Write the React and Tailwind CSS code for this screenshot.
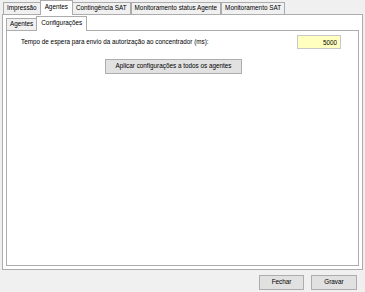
import { useState } from 'react'

const OUTER_TABS = ['Impressão', 'Agentes', 'Contingência SAT', 'Monitoramento status Agente', 'Monitoramento SAT']
const INNER_TABS = ['Agentes', 'Configurações']

function Tab({ label, active, onClick }) {
  return (
    <button
      onClick={onClick}
      className={`leading-none whitespace-nowrap border border-b-0 ${
        active
          ? 'bg-white border-[#acacac] h-[15px] px-[4px] -mx-[1px] relative z-10 mb-[-1px] pb-[1px]'
          : 'bg-[#f0f0f0] border-[#acacac] h-[12px] px-[3px]'
      }`}
    >
      {label}
    </button>
  )
}

export default function App() {
  const [outer, setOuter] = useState(1)
  const [inner, setInner] = useState(1)
  const [timeout, setTimeoutValue] = useState('5000')

  return (
    <div
      className="w-[365px] h-[292px] bg-[#f0f0f0] text-[6.35px] text-black flex flex-col overflow-hidden"
      style={{ fontFamily: '"Liberation Sans", Arial, sans-serif' }}
    >
      {/* abas principais */}
      <div className="flex items-end h-[14px] pl-[3px]">
        {OUTER_TABS.map((t, i) => (
          <Tab key={t} label={t} active={outer === i} onClick={() => setOuter(i)} />
        ))}
      </div>

      <div className="mx-[2px] h-[256px] border border-[#acacac] bg-white px-[3px] pt-[1px] pb-[3px] flex flex-col">
        {/* abas internas */}
        <div className="flex items-end h-[14px]">
          {INNER_TABS.map((t, i) => (
            <Tab key={t} label={t} active={inner === i} onClick={() => setInner(i)} />
          ))}
        </div>

        <div className="flex-1 border border-[#acacac] bg-white pl-[14px] pr-[17px] pt-[4px]">
          <div className="flex items-center justify-between h-[14px]">
            <span>Tempo de espera para envio da autorização ao concentrador (ms):</span>
            <input
              value={timeout}
              onChange={e => setTimeoutValue(e.target.value)}
              className="w-[44px] h-[14px] bg-[#ffffc0] border border-[#c8c8c8] text-right pr-[3px] outline-none text-[6.35px]"
            />
          </div>
          <div className="flex justify-center mt-[10px] pr-[15px]">
            <button className="h-[15px] px-[9px] bg-[#e1e1e1] border border-[#adadad] leading-none">
              Aplicar configurações a todos os agentes
            </button>
          </div>
        </div>
      </div>

      {/* rodapé */}
      <div className="flex justify-end gap-[7px] pr-[8px] mt-[5px]">
        <button className="w-[45px] h-[15px] bg-[#e1e1e1] border border-[#adadad] leading-none">Fechar</button>
        <button className="w-[46px] h-[15px] bg-[#e1e1e1] border border-[#adadad] leading-none">Gravar</button>
      </div>
    </div>
  )
}
